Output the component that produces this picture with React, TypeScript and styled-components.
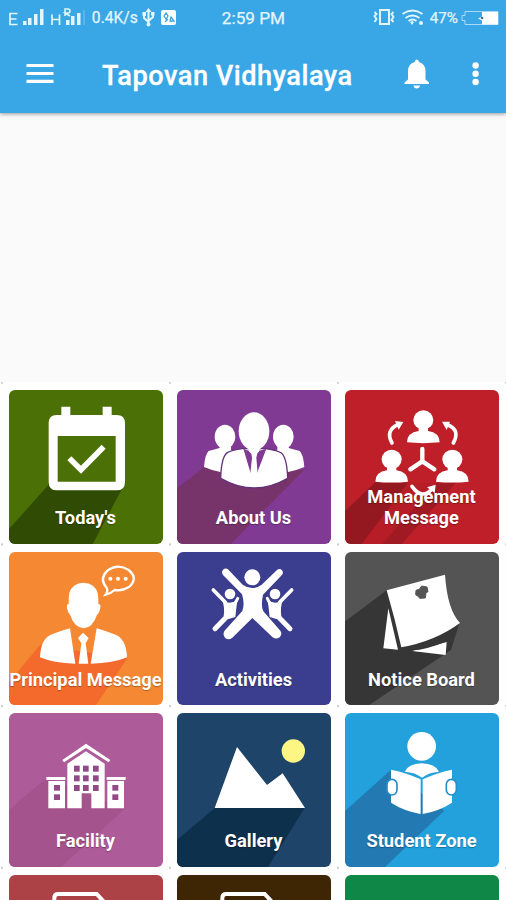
import React from "react";
import styled, { createGlobalStyle } from "styled-components";

const GlobalStyle = createGlobalStyle`
  * { box-sizing: border-box; }
  html, body { margin: 0; padding: 0; background: #fafafa; overflow: hidden; }
  body { font-family: Roboto, "Noto Sans", sans-serif; color: #fff; }
`;

const Screen = styled.main`
  width: 506px;
  height: 900px;
  overflow: hidden;
  background: #fafafa;
  display: flex;
  flex-direction: column;
`;

const Header = styled.header`
  flex: none;
  height: 113px;
  background: #39a7e5;
  box-shadow: 0 1px 4px rgba(0, 0, 0, 0.4);
`;

const StatusBar = styled.div`
  height: 36px;
  display: grid;
  grid-template-columns: 1fr auto 1fr;
  align-items: center;
  padding: 0 7px 0 8px;
  color: #e3f5ff;
`;

const StatusGroup = styled.div<{ $end?: boolean }>`
  display: flex;
  align-items: center;
  justify-content: ${(p) => (p.$end ? "flex-end" : "flex-start")};
`;

const StatusText = styled.span<{ $size: number; $width?: number }>`
  font-size: ${(p) => p.$size}px;
  line-height: 20px;
  width: ${(p) => (p.$width ? `${p.$width}px` : "auto")};
  white-space: nowrap;
  -webkit-text-stroke: 0.25px currentColor;
`;

const StatusIcon = styled.svg<{ $gap?: number }>`
  display: block;
  flex: none;
  margin-left: ${(p) => p.$gap ?? 0}px;
`;

const AppBar = styled.div`
  height: 77px;
  display: flex;
  align-items: center;
  padding: 0 10px 0 26px;
`;

const IconButton = styled.button<{ $width: number }>`
  width: ${(p) => p.$width}px;
  height: 34px;
  padding: 0;
  border: 0;
  background: none;
  color: #fff;
  display: flex;
  align-items: center;
  justify-content: center;
`;

const Title = styled.h1`
  flex: 1;
  margin: 2px 0 0 48px;
  font-size: 27.2px;
  line-height: 32px;
  font-weight: 500;
  letter-spacing: 0.5px;
  -webkit-text-stroke: 0.3px currentColor;
  white-space: nowrap;
`;

const Banner = styled.section`
  flex: none;
  height: 269px;
`;

const Grid = styled.section`
  display: grid;
  grid-template-columns: repeat(3, 168px);
  grid-auto-rows: 161.7px;
  padding: 4px 0 0 2px;
  background-color: #fefefe;
  background-image: radial-gradient(circle, #cfcfcf 0.8px, transparent 1.6px);
  background-size: 168px 161.7px;
  background-position: 86px 81.6px;
`;

const Cell = styled.div`
  padding: 4px 7px;
`;

const Tile = styled.article<{ $color: string }>`
  width: 153.6px;
  height: 153.6px;
  border-radius: 6px;
  overflow: hidden;
  background: ${(p) => p.$color};
  display: grid;
`;

const Art = styled.svg`
  grid-area: 1 / 1;
  display: block;
  width: 154px;
  height: 154px;
`;

const Label = styled.div`
  grid-area: 1 / 1;
  align-self: end;
  justify-self: center;
  z-index: 1;
  margin: 0 1px 16px 0;
  font-size: 18.3px;
  line-height: 21px;
  font-weight: 700;
  text-align: center;
  white-space: nowrap;
  text-shadow: 0 1px 1px rgba(0, 0, 0, 0.3);
`;

const Today = () => (
  <>
    <path d="M148 312L20 455V500H274L372 315z" fill="#304b03" />
    <path d="M184 80h27v25h97V80h27v25h15q25 0 25 25v175q0 26-25 26H170q-24 0-24-26V130q0-25 24-25h14z" />
    <path d="M173 168h174v137H173z" fill="#4b7006" />
    <path d="M208 235l35 34 68-69" fill="none" stroke="#fff" strokeWidth="17" />
  </>
);

const Sider = () => (
  <>
    <ellipse cx="171" cy="170" rx="31" ry="36" />
    <path d="M155 196h34v14l24 9v62q-60 0-105-20 3-38 14-48l33-9z" />
  </>
);

const About = () => (
  <>
    <path d="M108 262L20 330V500H180L408 270z" fill="#77346a" />
    <Sider />
    <g transform="translate(517 0) scale(-1 1)"><Sider /></g>
    <path d="M158 295q2-65 20-77 12-7 44-12h72q35 5 46 13 17 14 19 76-100 58-201 0z" stroke="#65327a" strokeWidth="4" />
    <path d="M226 206l22 74 10-47 9 47 28-74-27 8-10 12-12-12z" fill="#803a93" />
    <path d="M249 215h20l-4 18 4 48h-22l5-48z" />
    <ellipse cx="258" cy="154" rx="46" ry="57" />
    <path d="M243 197h30v18l-15 12-15-12z" />
  </>
);

const Bust = ({ x, y }: { x: number; y: number }) => (
  <g transform={`translate(${x} ${y})`}>
    <ellipse cx="0" cy="28" rx="30" ry="29" />
    <path d="M-14 50h28v11q35 5 35 34-49 5-98 0 0-29 35-34z" />
  </g>
);

const Management = () => (
  <>
    <path d="M118 307L20 400V500H72L216 308z" fill="#941820" />
    <path d="M300 310L132 480V500H190L360 308z" fill="#a01a24" />
    <path d="M216 308L72 500h60L300 310z" fill="#b61d27" />
    <Bust x={262} y={92} />
    <Bust x={167} y={210} />
    <Bust x={349} y={210} />
    <g fill="none" stroke="#fff" strokeWidth="11" strokeLinecap="round">
      <path d="M259 207v37M259 244l-36 24M259 244l36 24" strokeWidth="13" />
      <path d="M168 189q-22-40 22-57M352 189q22-40-18-55" />
      <path d="M228 319q30 43 62 6" />
    </g>
    <path d="M177 123l25 3-14 23zM318 125l24 0-10 25zM273 322l26-8-3 25z" />
  </>
);

const Principal = () => (
  <>
    <path d="M120 300L20 420V500H275L382 340z" fill="#f36a2c" />
    <path d="M208 143q10-29 42-30 34 1 43 31 3 20 2 32 8 1 6 12-3 17-10 21-12 38-40 41-28-2-40-39-8-7-10-22-2-12 5-12-1-18 2-34z" />
    <path d="M210 250l16 106q-67-2-106-19 2-60 40-71 25-9 50-16zM290 250l-18 106q70-2 109-19-2-60-42-71-26-9-49-16zM249 263l17 16-9 16 8 61h-29l8-61-10-16z" />
    <path d="M320 128q-24-27 3-52 31-22 63-1 30 25 1 51-21 13-43 9-11 10-27 14 8-11 3-21z" fill="none" stroke="#fff" strokeWidth="7" />
    <circle cx="331" cy="101" r="6" /><circle cx="354" cy="101" r="6" /><circle cx="377" cy="101" r="6" />
  </>
);

const Kid = () => (
  <>
    <circle cx="186" cy="147" r="16" />
    <g fill="none" stroke="#fff" strokeLinecap="round">
      <path d="M136 135l36 37" strokeWidth="11" />
      <path d="M209 160l-10 20" strokeWidth="9" />
      <path d="M141 251l38-39" strokeWidth="15" />
    </g>
    <path d="M163 166q23 15 45-2-3 25-6 52l-20 6-15-10q4-22-4-46z" />
  </>
);

const Activities = () => (
  <>
    <Kid />
    <g transform="translate(507 0) scale(-1 1)"><Kid /></g>
    <circle cx="253" cy="97" r="24" />
    <path d="M180 73l44 46q29 20 57 0l46-44q8-7 15 1 6 8-1 15l-56 58q-7 36 1 50l51 58q7 10-2 20-11 8-22-1l-60-57-60 59q-12 10-22 0-9-11 0-22l52-58q8-21-1-50l-57-58q-6-8 0-16 8-6 15-1z" />
  </>
);

const Notice = () => (
  <>
    <path d="M153 135L20 235V500H70L345 315L370 235z" fill="#363637" />
    <path d="M157 190l29 124-44-4zM228 318l104-27-3 39z" />
    <path d="M195 310q100-18 172-70l-32 48q-69 28-105 28z" fill="#363637" />
    <path d="M152 136L327 89q7 105 45 145-75 55-176 73-19-85-44-171z" />
    <path d="M257 123l16 3 3 14-6 3-2 16-17 1-3-5-9-6 1-13 10-3z" fill="#545454" stroke="#545454" strokeWidth="3" strokeLinejoin="round" />
  </>
);

const Facility = () => (
  <>
    <path d="M140 216L20 320V500H165L374 310z" fill="#a4538d" />
    <path d="M187 163l71-49 73 49-5 7-68-43-66 43zM202 174l56-37 56 37v134h-40v-45h-29v45h-43zM139 214h57v9h-57zM320 214h57v9h-57zM145 226h50v82h-50zM322 226h50v82h-50z" />
    <g fill="#924987">
      {[222, 249, 279].flatMap((x) => [180, 209, 238].map((y) => <rect key={`${x}-${y}`} x={x} y={y} width="17" height="18" />))}
      {[162, 337].flatMap((x) => [238, 266].map((y) => <rect key={`${x}-${y}`} x={x} y={y} width="18" height="17" />))}
    </g>
  </>
);

const Gallery = () => (
  <>
    <path d="M141 307L20 408V500H290L410 307z" fill="#0d304d" />
    <path d="M207 124l90 114 47-35 67 104H140z" />
    <circle cx="376" cy="136" r="35" fill="#fdf584" />
  </>
);

const Student = () => (
  <>
    <path d="M165 192L20 322V500H130L325 315z" fill="#237ab2" />
    <circle cx="257" cy="122" r="43" />
    <path d="M206 198q12-24 51-25 40 1 52 25-31 2-51 18-20-16-52-18z" />
    <path d="M165 192q49 10 89 29v104q-50-9-89-34zM348 192q-48 10-88 29v104q50-9 88-34z" />
    <g stroke="#238fca" strokeWidth="5">
      <rect x="153" y="221" width="30" height="47" rx="15" />
      <rect x="331" y="221" width="30" height="47" rx="15" />
    </g>
  </>
);

const Sheet = () => (
  <path d="M163 600v-24q0-11 12-11h115l28 30" fill="none" stroke="#fff" strokeWidth="12" />
);

type TileData = { color: string; art: React.ReactNode; label?: React.ReactNode; top: number };

const tiles: TileData[] = [
  { color: "#4b7006", art: <Today />, label: "Today's", top: 30 },
  { color: "#803a93", art: <About />, label: "About Us", top: 30 },
  { color: "#be1f29", art: <Management />, label: <>Management<br />Message</>, top: 30 },
  { color: "#f58832", art: <Principal />, label: "Principal Message", top: 21 },
  { color: "#3b3d8e", art: <Activities />, label: "Activities", top: 21 },
  { color: "#545454", art: <Notice />, label: "Notice Board", top: 21 },
  { color: "#ae5c99", art: <Facility />, label: "Facility", top: 22 },
  { color: "#1e446a", art: <Gallery />, label: "Gallery", top: 22 },
  { color: "#22a1dc", art: <Student />, label: "Student Zone", top: 22 },
  { color: "#ac4146", art: <Sheet />, top: 508 },
  { color: "#3e2503", art: <Sheet />, top: 508 },
  { color: "#0f8746", art: null, top: 508 },
];

export default function App() {
  return (
    <Screen>
      <GlobalStyle />
      <Header>
        <StatusBar>
          <StatusGroup>
            <StatusIcon width="80" height="24" viewBox="8 6 80 24" fill="currentColor">
              <path d="M9.500 13.500h8M9.500 19h7M9.500 24.500h8M10 13v12M52 14.500v10.500M59.500 14.500v10.500M52 19.500h7" stroke="currentColor" strokeWidth="1.700" />
              <path d="M23 21h3.500v4h-3.500zM28 18h3.500v7h-3.500zM34 14h3.500v11h-3.500zM40 9h3.500v16H40zM66 20h3.500v5h-3.500zM71 16h3.500v9h-3.500zM77 13h3.500v12h-3.500z" />
              <path d="M65 16V9h3q2 0 2 2t-2 2h-3l5 3" fill="none" stroke="currentColor" strokeWidth="1.500" />
              <path d="M83 10h2v15h-2z" opacity=".2" />
            </StatusIcon>
            <StatusText $size={15.6} $width={52}>&nbsp;0.4K/s</StatusText>
            <StatusIcon $gap={1} width="37" height="20" viewBox="141 8 37 20">
              <path d="M148.500 10v15M144 14v4l4.500 4M153 13v4l-4.500 4" fill="none" stroke="currentColor" strokeWidth="2" />
              <path d="M148.500 8l3 4h-6zM142.500 12h3.500v4h-3.500zM151 12h3.500v3.500h-3.500z" fill="currentColor" /><circle cx="148.500" cy="24.500" r="2" fill="currentColor" />
              <rect x="161" y="10" width="15" height="15" rx="2" fill="#fff" />
              <path d="M166 13l-2 3 2 3 2-3zM168 19l-3 3M171 17l3 4h-4z" fill="none" stroke="#39a7e5" strokeWidth="1.300" />
            </StatusIcon>
          </StatusGroup>
          <StatusText $size={17.2}>2:59 PM</StatusText>
          <StatusGroup $end>
            <StatusIcon width="54" height="20" viewBox="373 8 54 20" fill="none" stroke="currentColor" strokeWidth="1.500">
              <rect x="381" y="10" width="9" height="14" strokeWidth="2" />
              <path d="M375.500 12l2 2-2 2 2 3-2 3M394.500 12l-2 2 2 3-2 3 2 2M403.500 14q10-7 20 0M406.500 18q7-5 14 0M409.500 21q4-3 8 0" strokeWidth="1.900" />
              <path d="M411 22l2.500-1 1.500 1-2 3z" fill="currentColor" stroke="none" /><circle cx="422" cy="23" r="2" fill="currentColor" stroke="none" />
            </StatusIcon>
            <StatusText $size={15.2}>&nbsp;47%</StatusText>
            <StatusIcon $gap={3} width="38" height="18" viewBox="461 8 38 18">
              <path d="M465 10.500h33v13h-33v-4h-3v-5h3z" fill="none" stroke="currentColor" opacity=".65" />
              <path d="M482 11h16v12.500h-16v-4l-4-2 4-2z" fill="#fff" /><circle cx="482" cy="17" r="1.300" fill="#39738f" />
            </StatusIcon>
          </StatusGroup>
        </StatusBar>
        <AppBar>
          <IconButton $width={28} aria-label="Menu">
            <svg width="28" height="24" viewBox="0 0 28 24"><path d="M.5 2.500h27M.5 10.500h27M.5 18.300h27" stroke="currentColor" strokeWidth="3.200" /></svg>
          </IconButton>
          <Title>Tapovan Vidhyalaya</Title>
          <IconButton $width={26} aria-label="Notifications">
            <svg width="26" height="32" viewBox="404 59 26 32" fill="currentColor">
              <path d="M414.700 62q0-2.500 2.100-2.500t2.100 2.500q6.600 2 6.600 9v8.500l3.500 3V84h-24.500v-1.500l3.500-3V71q0-7 6.700-9zM413.500 85.500h6.500q-.5 3-3.200 3-2.800 0-3.300-3z" />
            </svg>
          </IconButton>
          <IconButton $width={66} aria-label="More options">
            <svg width="66" height="26" viewBox="430 62 66 26" fill="currentColor">
              <circle cx="475.600" cy="65.500" r="3.200" /><circle cx="475.600" cy="73.800" r="3.200" /><circle cx="475.600" cy="82" r="3.200" />
            </svg>
          </IconButton>
        </AppBar>
      </Header>
      <Banner />
      <Grid>
        {tiles.map((tile, i) => (
          <Cell key={i}>
            <Tile $color={tile.color}>
              <Art viewBox={`27 ${tile.top} 462 462`} fill="#fff">{tile.art}</Art>
              {tile.label && <Label>{tile.label}</Label>}
            </Tile>
          </Cell>
        ))}
      </Grid>
    </Screen>
  );
}
